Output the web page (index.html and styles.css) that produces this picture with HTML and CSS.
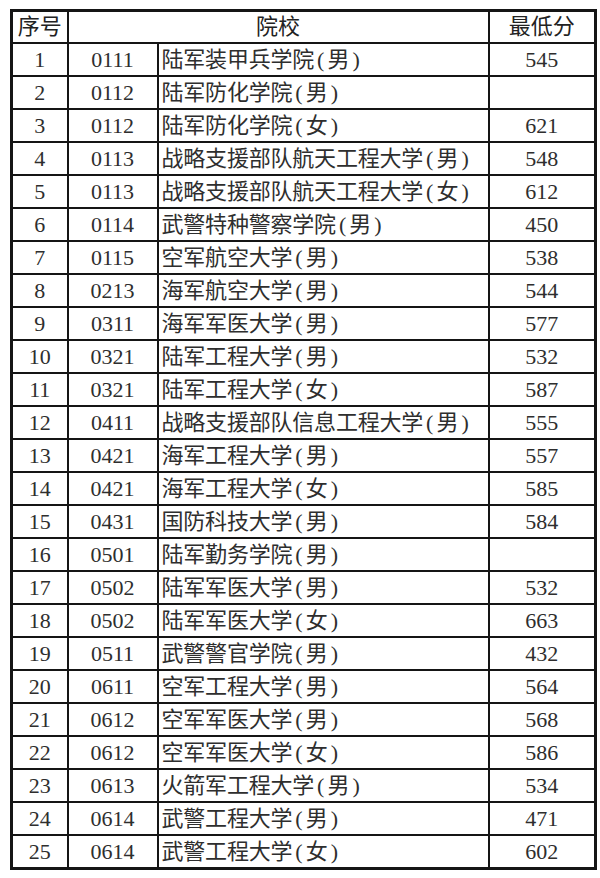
FILE: index.html
```html
<!DOCTYPE html>
<html lang="zh-CN">
<head>
<meta charset="utf-8">
<title>院校最低分</title>
<link rel="stylesheet" href="styles.css">
</head>
<body>
<div class="page">
<table class="scores">
<colgroup>
<col class="c-no"><col class="c-code"><col class="c-name"><col class="c-score">
</colgroup>
<thead>
<tr><th>序号</th><th colspan="2">院校</th><th>最低分</th></tr>
</thead>
<tbody>
<tr><td>1</td><td>0111</td><td class="name">陆军装甲兵学院<span class="sex">(男)</span></td><td>545</td></tr>
<tr><td>2</td><td>0112</td><td class="name">陆军防化学院<span class="sex">(男)</span></td><td></td></tr>
<tr><td>3</td><td>0112</td><td class="name">陆军防化学院<span class="sex">(女)</span></td><td>621</td></tr>
<tr><td>4</td><td>0113</td><td class="name">战略支援部队航天工程大学<span class="sex">(男)</span></td><td>548</td></tr>
<tr><td>5</td><td>0113</td><td class="name">战略支援部队航天工程大学<span class="sex">(女)</span></td><td>612</td></tr>
<tr><td>6</td><td>0114</td><td class="name">武警特种警察学院<span class="sex">(男)</span></td><td>450</td></tr>
<tr><td>7</td><td>0115</td><td class="name">空军航空大学<span class="sex">(男)</span></td><td>538</td></tr>
<tr><td>8</td><td>0213</td><td class="name">海军航空大学<span class="sex">(男)</span></td><td>544</td></tr>
<tr><td>9</td><td>0311</td><td class="name">海军军医大学<span class="sex">(男)</span></td><td>577</td></tr>
<tr><td>10</td><td>0321</td><td class="name">陆军工程大学<span class="sex">(男)</span></td><td>532</td></tr>
<tr><td>11</td><td>0321</td><td class="name">陆军工程大学<span class="sex">(女)</span></td><td>587</td></tr>
<tr><td>12</td><td>0411</td><td class="name">战略支援部队信息工程大学<span class="sex">(男)</span></td><td>555</td></tr>
<tr><td>13</td><td>0421</td><td class="name">海军工程大学<span class="sex">(男)</span></td><td>557</td></tr>
<tr><td>14</td><td>0421</td><td class="name">海军工程大学<span class="sex">(女)</span></td><td>585</td></tr>
<tr><td>15</td><td>0431</td><td class="name">国防科技大学<span class="sex">(男)</span></td><td>584</td></tr>
<tr><td>16</td><td>0501</td><td class="name">陆军勤务学院<span class="sex">(男)</span></td><td></td></tr>
<tr><td>17</td><td>0502</td><td class="name">陆军军医大学<span class="sex">(男)</span></td><td>532</td></tr>
<tr><td>18</td><td>0502</td><td class="name">陆军军医大学<span class="sex">(女)</span></td><td>663</td></tr>
<tr><td>19</td><td>0511</td><td class="name">武警警官学院<span class="sex">(男)</span></td><td>432</td></tr>
<tr><td>20</td><td>0611</td><td class="name">空军工程大学<span class="sex">(男)</span></td><td>564</td></tr>
<tr><td>21</td><td>0612</td><td class="name">空军军医大学<span class="sex">(男)</span></td><td>568</td></tr>
<tr><td>22</td><td>0612</td><td class="name">空军军医大学<span class="sex">(女)</span></td><td>586</td></tr>
<tr><td>23</td><td>0613</td><td class="name">火箭军工程大学<span class="sex">(男)</span></td><td>534</td></tr>
<tr><td>24</td><td>0614</td><td class="name">武警工程大学<span class="sex">(男)</span></td><td>471</td></tr>
<tr><td>25</td><td>0614</td><td class="name">武警工程大学<span class="sex">(女)</span></td><td>602</td></tr>
</tbody>
</table>
</div>
</body>
</html>
```

FILE: styles.css
```css
html, body {
  margin: 0;
  padding: 0;
  background: #ffffff;
}
.page {
  width: 600px;
  height: 878px;
  padding: 9px 0 0 10px;
  box-sizing: border-box;
}
.scores {
  border-collapse: collapse;
  table-layout: fixed;
  width: 584px;
  font-family: "Liberation Serif", "Noto Sans CJK SC", serif;
  font-size: 22px;
  color: #2e2e2e;
  border: 3px solid #151515;
}
.c-no { width: 56px; }
.c-code { width: 90px; }
.c-name { width: 331px; }
.c-score { width: 107px; }
.scores th,
.scores td {
  border: 2px solid #151515;
  padding: 0;
  text-align: center;
  vertical-align: middle;
  line-height: 1;
  white-space: nowrap;
  overflow: hidden;
}
.scores th {
  height: 29px;
  font-weight: 400;
  color: #222;
  padding-bottom: 1px;
}
.scores td {
  height: 31px;
}
.scores td.name {
  text-align: left;
  padding-left: 3px;
  letter-spacing: -0.2px;
}
.sex {
  margin-left: 3px;
  letter-spacing: 3px;
}
```
